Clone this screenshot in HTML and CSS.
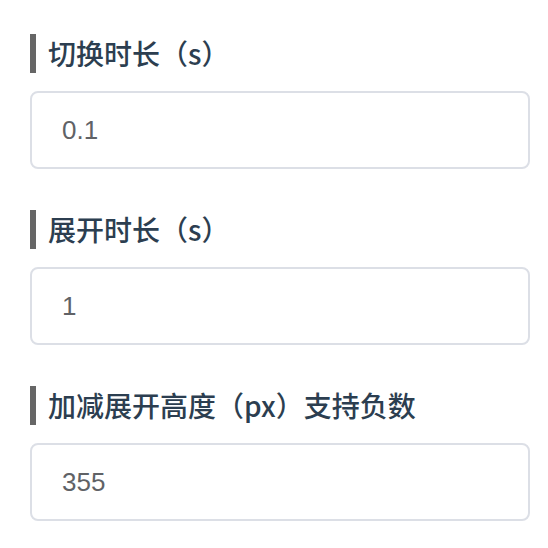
FILE: index.html
```html
<!DOCTYPE html>
<html>
<head>
    <meta charset="utf-8">
    <link rel="stylesheet" href="styles.css">
</head>
<body>
    <div class="container">
        <div class="field">
            <label class="title" for="switchTime">切换时长（s）</label>
            <input type="text" id="switchTime" class="input" value="0.1">
        </div>
        <div class="field">
            <label class="title" for="openTime">展开时长（s）</label>
            <input type="text" id="openTime" class="input" value="1">
        </div>
        <div class="field">
            <label class="title" for="openHeight">加减展开高度（px）支持负数</label>
            <input type="text" id="openHeight" class="input" value="355">
        </div>
    </div>
</body>
</html>
```

FILE: styles.css
```css
  body {
      margin: 0;
      background: #fff;
      font-family: "Noto Sans CJK SC", "Noto Sans", sans-serif;
  }
  .container {
      width: 500px;
      padding: 34px 0 0 30px;
  }
  .field {
      display: flex;
      flex-direction: column;
      margin-bottom: 41px;
  }
  .title {
      display: block;
      height: 39px;
      line-height: 39px;
      border-left: 6px solid #666;
      padding-left: 12px;
      font-size: 28px;
      font-weight: 500;
      color: #2c3e50;
  }
  .input {
      box-sizing: border-box;
      width: 500px;
      height: 78px;
      margin-top: 18px;
      padding: 0 30px;
      border: 2px solid #dcdfe6;
      border-radius: 8px;
      font-family: "Liberation Sans", Arial, sans-serif;
      font-size: 26px;
      color: #606266;
      outline: none;
  }
```
